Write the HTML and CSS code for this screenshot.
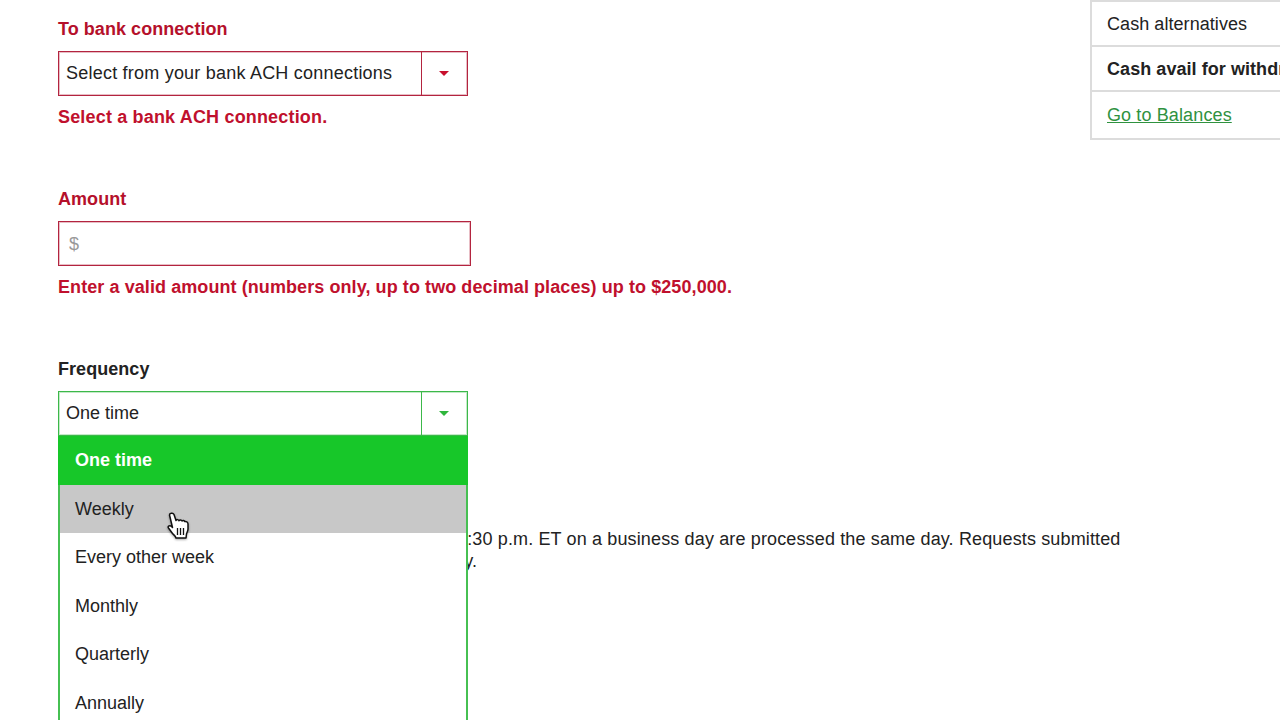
FILE: index.html
```html
<!DOCTYPE html>
<html lang="en">
<head>
<meta charset="utf-8">
<title>Transfer</title>
<link rel="stylesheet" href="styles.css">
</head>
<body>
<div class="page">
  <main class="form">
    <div class="field">
      <label class="label is-error">To bank connection</label>
      <div class="select select-error">
        <span class="select-value">Select from your bank ACH connections</span>
        <span class="select-btn"><i class="caret caret-red"></i></span>
      </div>
      <p class="error error-short">Select a bank ACH connection.</p>
    </div>
    <div class="field">
      <label class="label is-error">Amount</label>
      <div class="input"><span class="dollar">$</span></div>
      <p class="error">Enter a valid amount (numbers only, up to two decimal places) up to $250,000.</p>
    </div>
    <div class="field field-frequency">
      <label class="label">Frequency</label>
      <div class="select-wrap">
        <div class="select select-open">
          <span class="select-value">One time</span>
          <span class="select-btn"><i class="caret caret-green"></i></span>
        </div>
        <ul class="menu">
          <li class="option option-selected">One time</li>
          <li class="option option-hover">Weekly</li>
          <li class="option">Every other week</li>
          <li class="option">Monthly</li>
          <li class="option">Quarterly</li>
          <li class="option">Annually</li>
        </ul>
      </div>
    </div>
    <p class="note">Bank ACH transfer requests you transmit prior to 4:30 p.m. ET on a business day are processed the same day. Requests submitted<br>after that time are processed the next business day.</p>
  </main>
  <aside class="panel">
    <div class="panel-row">Cash alternatives</div>
    <div class="panel-row panel-strong">Cash avail for withdrawal</div>
    <div class="panel-row panel-last"><a class="link" href="#">Go to Balances</a></div>
  </aside>
</div>
<svg class="cursor" width="26" height="30" viewBox="0 0 26 30" aria-hidden="true">
  <path d="M4.500 4C4.500 2.300 8 1.500 9 3.500L11 9.500C11.500 8.300 13.500 8.300 14 9.700C14.600 8.700 16.400 8.700 17 10C17.700 9.200 19.300 9.400 19.800 10.600C21 10.200 23 11 23 13L23 18C23 20 22 21 21.500 23L21 27L11 27C10.500 25 9 24 7.500 22.500L3.500 17C2.500 15.500 4 14 6 15L7.500 16.500z" fill="#fff" stroke="#111" stroke-width="1.500" stroke-linejoin="round"/>
  <path d="M12.500 17V24M15.500 17V24M18.500 17V24" fill="none" stroke="#111" stroke-width="1.300"/>
</svg>
</body>
</html>
```
FILE: styles.css
```css
* { box-sizing: border-box; }
html, body { margin: 0; height: 720px; overflow: hidden; background: #fff; }
body { font-family: "Liberation Sans", Arial, sans-serif; font-size: 18px; line-height: 22px; color: #222; position: relative; }
.page { display: flex; justify-content: space-between; height: 720px; overflow: hidden; }
.form { width: 1090px; padding: 18px 0 0 58px; flex: none; }
.field { margin-bottom: 60px; }
.field-frequency { margin-bottom: 92px; }
.label { display: block; font-weight: 700; margin-bottom: 11px; color: #222; letter-spacing: .05px; }
.label.is-error { color: #b5102b; }
.error { margin: 10px 0 0; font-weight: 700; color: #c0102d; letter-spacing: .08px; }
.error-short { letter-spacing: .17px; }
.select { display: flex; width: 410px; height: 45px; border: 1px solid; background: #fff; }
.select-error { border-color: #b3243f; box-shadow: inset 0 0 0 1px rgba(179, 36, 63, .3); }
.select-open { border-color: #3cb84a; box-shadow: inset 0 0 0 1px rgba(60, 184, 74, .3); }
.select-value { flex: 1; padding: 0 7px; line-height: 43px; white-space: nowrap; }
.select-error .select-value { letter-spacing: .22px; }
.select-btn { width: 46px; flex: none; border-left: 1px solid; padding-right: 2px; display: flex; align-items: center; justify-content: center; }
.select-error .select-btn { border-color: #b3243f; }
.select-open .select-btn { border-color: #3cb84a; }
.caret { width: 0; height: 0; border-left: 5px solid transparent; border-right: 5px solid transparent; border-top: 5px solid; }
.caret-red { color: #c8102e; }
.caret-green { color: #2fb63c; }
.input { width: 413px; height: 45px; border: 1px solid #b3243f; box-shadow: inset 0 0 0 1px rgba(179, 36, 63, .3); padding: 0 10px; line-height: 44px; }
.dollar { color: #999; }
.select-wrap { position: relative; width: 410px; }
.menu { position: absolute; left: 0; top: 45px; width: 410px; margin: 0; padding: 0; list-style: none; background: #fff; border-left: 2px solid #46c052; border-right: 2px solid #46c052; z-index: 2; }
.option { height: 48.500px; line-height: 48.500px; padding-left: 15px; }
.option-selected { margin: 0 -2px; padding-left: 17px; background: #17c729; color: #fff; font-weight: 700; }
.option-hover { background: #c8c8c8; }
.note { margin: 0; width: 1070px; white-space: nowrap; letter-spacing: .14px; }
.panel { flex: none; width: 190px; height: 140px; border: 2px solid #dcdcdc; border-right: 0; }
.panel-row { height: 45px; line-height: 44px; padding-left: 15px; border-bottom: 2px solid #dcdcdc; white-space: nowrap; overflow: hidden; letter-spacing: .06px; }
.panel-strong { font-weight: 700; }
.panel-last { border-bottom: 0; height: 46px; line-height: 46px; }
.link { color: #2f923f; letter-spacing: .12px; }
.cursor { position: absolute; left: 165px; top: 511px; z-index: 3; filter: drop-shadow(0 1px 1px rgba(0, 0, 0, .35)); }
```
